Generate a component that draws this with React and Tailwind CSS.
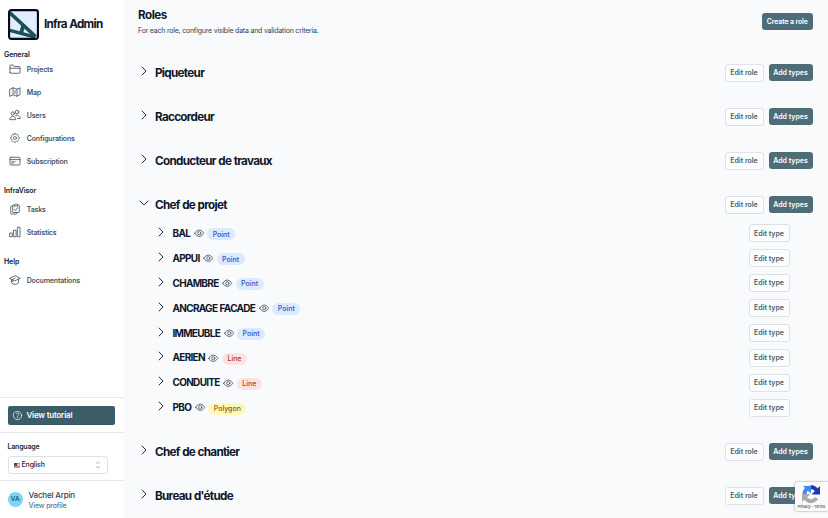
import React from "react";
import {
  HiOutlineCog8Tooth,
  HiOutlineQuestionMarkCircle,
} from "react-icons/hi2";

function icon(content) {
  return function Icon({ className }) {
    return (
      <svg className={className} viewBox="0 0 24 24" fill="none" stroke="currentColor" strokeWidth="1.7" strokeLinecap="round" strokeLinejoin="round">
        {content}
      </svg>
    );
  };
}

const Folder = icon(<path d="M2 19V5.5Q2 4 3.5 4H8L10.5 7H20.5Q22 7 22 8.5V19Q22 20.5 20.5 20.5H3.5Q2 20.5 2 19ZM2 10.5H22" />);
const MapFold = icon(
  <>
    <path d="M2 6.5L8 3.5L16 6.5L22 3.5V17.5L16 20.5L8 17.5L2 20.5Z" />
    <path d="M8 3.5V17.5M16 6.5V20.5M12 9V15" />
  </>
);
const Users = icon(
  <>
    <circle cx="7.5" cy="9" r="3.4" />
    <circle cx="16" cy="6" r="3.6" />
    <path d="M1.5 20.5C1.5 12.8 13.5 12.8 13.5 20.5ZM13 13.2C17 10.8 22.5 13.2 22.5 19H17" />
  </>
);
const Card = icon(<path d="M3.5 4.5H20.5Q22 4.5 22 6V18.5Q22 20 20.5 20H3.5Q2 20 2 18.5V6Q2 4.5 3.5 4.5ZM2 9.2H22M5.5 13.5H12M5.5 16.4H8.5" />);
const Tasks = icon(
  <>
    <path d="M7.5 6H4.5Q3.5 6 3.5 7V21Q3.5 22 4.5 22H14.5Q15.5 22 15.5 21V19" />
    <path d="M11 4H8.5Q7.5 4 7.5 5V18Q7.5 19 8.5 19H19.5Q20.5 19 20.5 18V5Q20.5 4 19.5 4H17M11 5.5V3.5Q14 0 17 3.5V5.5ZM11 12.5L13.2 15L17.2 9.5" />
  </>
);
const Bars = icon(<path d="M2 14H6.5V21.5H2ZM9.7 8.5H14.2V21.5H9.7ZM17.5 2.5H22V21.5H17.5Z" />);
const Cap = icon(<path d="M1.5 8.5L12 3.5L22.5 8.5L12 13.5ZM5 10.5V17.5Q12 24 19 17.5V10.5M12 8.5L7.5 11V15" />);
const Eye = icon(
  <>
    <path d="M1.5 12Q6 4.5 12 4.5T22.5 12Q18 19.5 12 19.5T1.5 12Z" />
    <circle cx="12" cy="12" r="3.7" />
  </>
);

const NAV = [
  {
    title: "General",
    items: [
      ["Projects", Folder],
      ["Map", MapFold],
      ["Users", Users],
      ["Configurations", HiOutlineCog8Tooth],
      ["Subscription", Card],
    ],
  },
  {
    title: "InfraVisor",
    items: [
      ["Tasks", Tasks],
      ["Statistics", Bars],
    ],
  },
  { title: "Help", items: [["Documentations", Cap]] },
];

const TYPES = [
  ["BAL", "Point"],
  ["APPUI", "Point"],
  ["CHAMBRE", "Point"],
  ["ANCRAGE FACADE", "Point"],
  ["IMMEUBLE", "Point"],
  ["AERIEN", "Line"],
  ["CONDUITE", "Line"],
  ["PBO", "Polygon"],
];

const ROLES = [
  { name: "Piqueteur" },
  { name: "Raccordeur" },
  { name: "Conducteur de travaux" },
  { name: "Chef de projet", types: TYPES },
  { name: "Chef de chantier" },
  { name: "Bureau d'étude" },
];

const BADGE = {
  Point: "bg-[#dbeafe] text-[#3451c6]",
  Line: "bg-[#fee2e2] text-[#b03a2e]",
  Polygon: "bg-[#fef9b8] text-[#95501c]",
};

function Logo() {
  return (
    <svg className="size-[31px] shrink-0" viewBox="0 0 32 32">
      <rect x="1.1" y="1.1" width="29.8" height="29.8" rx="2.4" fill="#e3eefb" />
      <g stroke="#1b515a" fill="none">
        <path d="M2 4 L28.5 28.5" strokeWidth="3.6" />
        <path d="M2 22 L28 29" strokeWidth="3.6" />
        <path d="M16 16 L13.5 25" strokeWidth="4" />
      </g>
      <rect x="1.1" y="1.1" width="29.8" height="29.8" rx="2.4" fill="none" stroke="#050b1c" strokeWidth="2.2" />
    </svg>
  );
}

function Chevron({ open }) {
  return (
    <svg className="size-3 shrink-0" viewBox="0 0 12 12" fill="none" stroke="#1e293b" strokeWidth="1" strokeLinecap="round" strokeLinejoin="round">
      <path d={open ? "M2 4.1 L6 8 L10 4.1" : "M4.1 2 L8 6 L4.1 10"} />
    </svg>
  );
}

function Outline({ children, className }) {
  return (
    <button className={"flex h-[18px] items-center justify-center rounded-[3px] border border-[#dde2e8] bg-[#fcfdfe] pt-px text-[7px] font-semibold text-[#48606b] " + className}>
      {children}
    </button>
  );
}

function Solid({ children, className }) {
  return (
    <button className={"flex h-[17px] items-center justify-center rounded-[3px] bg-[#4f6d78] pt-px text-[7px] font-semibold whitespace-nowrap text-white " + className}>
      {children}
    </button>
  );
}

function Role({ name, types }) {
  return (
    <section>
      <div className="flex h-11 items-center">
        <div className="-mt-0.5 flex"><Chevron open={!!types} /></div>
        <h2 className="ml-[5.5px] flex-1 pt-[3px] text-[11.7px] font-bold tracking-[-0.7px] text-[#0f172a] [word-spacing:0.4px]">{name}</h2>
        <Outline className="mt-px w-[39px]">Edit role</Outline>
        <Solid className="mt-px ml-[5px] w-11">Add types</Solid>
      </div>
      {types && (
        <div className="-mt-[5px] mb-[9px] pl-[17px] pr-[23px]">
          {types.map(([label, kind]) => (
            <div key={label} className="flex h-[24.9px] items-center">
              <div className="-mt-[3px] flex"><Chevron /></div>
              <h3 className="ml-[6px] text-[10px] font-bold tracking-[-0.7px] text-[#0f172a] [word-spacing:0.6px]">{label}</h3>
              <Eye className="ml-[3.5px] size-[10.5px] text-[#334155]" />
              <span className={"ml-[3px] mt-0.5 flex h-3 items-center rounded-full px-[5.5px] pt-px text-[7px] font-medium " + BADGE[kind]}>{kind}</span>
              <Outline className="ml-auto w-[41px]">Edit type</Outline>
            </div>
          ))}
        </div>
      )}
    </section>
  );
}

function Sidebar() {
  return (
    <aside className="flex w-[124px] shrink-0 flex-col bg-white">
      <div className="flex h-[49px] items-center gap-[5.5px] pl-[7.5px]">
        <Logo />
        <span className="pt-px text-[11.7px] font-bold tracking-[-0.75px] whitespace-nowrap text-[#0f172a] [word-spacing:0.4px]">Infra Admin</span>
      </div>
      <nav>
        {NAV.map(({ title, items }, i) => (
          <div key={title} className="mb-[11.7px]">
            <div className={"flex h-[11px] items-center pl-1 text-[7px] font-semibold tracking-[-0.1px] text-[#0f172a] " + (i ? "mb-[2.3px]" : "-mb-[2.2px]")}>
              <span className={i ? "pt-0.5" : "pt-px"}>{title}</span>
            </div>
            {items.map(([label, Icon]) => (
              <a key={label} className="flex h-[23px] items-center gap-[5.7px] pl-[9px] text-[7px] font-semibold tracking-[-0.17px] text-[#475569]">
                <Icon className="size-3" />
                <span className="pt-px">{label}</span>
              </a>
            ))}
          </div>
        ))}
      </nav>
      <div className="mt-auto flex h-[35px] items-center border-t border-[#e5e9ee] pr-[9px] pl-[7.5px]">
        <button className="flex h-[19px] w-full items-center gap-1 rounded-[2px] bg-[#3b5d69] pl-1 text-[8px] font-semibold tracking-[-0.22px] text-white">
          <HiOutlineQuestionMarkCircle className="size-[11px]" />
          View tutorial
        </button>
      </div>
      <div className="h-[48px] border-t border-[#e5e9ee] px-[7.5px] pt-[8px]">
        <div className="text-[7px] leading-[11px] font-semibold tracking-[-0.2px] text-[#1e293b]">Language</div>
        <div className="mt-[3.5px] flex h-[18px] w-[100px] items-center rounded-[3px] border border-[#dbe3e8] pt-px pr-1.5 pl-[5px] text-[7px] font-medium tracking-[-0.15px] text-[#1e293b]">
          <svg className="mr-0.5 h-[5px] w-[6px]" viewBox="0 0 12 10">
            <path d="M0 0H12V10H0Z" fill="#fff" />
            <path d="M0 1H12M0 4H12M0 7H12M0 9.5H12" stroke="#dc3c32" strokeWidth="1.5" />
            <path d="M0 0H6V5.5H0Z" fill="#30478a" />
          </svg>
          English
          <svg className="ml-auto h-2 w-1.5" viewBox="0 0 6 8" fill="none" stroke="#8c96a3" strokeWidth=".7" strokeLinecap="round">
            <path d="M1.3 2.5 L3 .8 L4.7 2.5 M1.3 5.5 L3 7.2 L4.7 5.5" />
          </svg>
        </div>
      </div>
      <div className="flex h-[38px] items-center gap-[5.5px] border-t border-[#e5e9ee] pl-[7.5px]">
        <div className="flex size-[15.5px] items-center justify-center rounded-full bg-[#7dd3fc] text-[6.5px] font-medium text-[#1e4057]">VA</div>
        <div className="pt-px">
          <div className="text-[8px] leading-[10px] font-medium tracking-[-0.2px] text-[#334155]">Vachel Arpin</div>
          <div className="pt-px text-[7px] leading-[10px] font-medium tracking-[-0.15px] text-[#64748b]">View profile</div>
        </div>
      </div>
    </aside>
  );
}

function Captcha() {
  return (
    <div className="absolute top-[482px] right-0 flex h-[29px] w-[33.5px] flex-col items-center rounded-l-[2px] bg-[#fafafa] pt-[3px] shadow-[0_0_2px_#777]">
      <svg className="size-[18px] shrink-0" viewBox="0 0 36 36" fill="none" strokeWidth="8">
        <path d="M18 4A14 14 0 0 1 31 18" stroke="#1c3aa9" />
        <path d="M36 2V19H19Z" fill="#1c3aa9" />
        <path d="M5 18A13 13 0 0 1 18 5" stroke="#4285f4" />
        <path d="M2 2H18V17Z" fill="#4285f4" />
        <path d="M5 18A13 13 0 0 0 29 26" stroke="#ababab" />
        <path d="M0 34V18H17Z" fill="#ababab" />
      </svg>
      <div className="mt-px text-[4px] leading-[5px] tracking-[-0.15px] whitespace-nowrap text-[#333]">Privacy - Terms</div>
    </div>
  );
}

export default function App() {
  return (
    <div className="relative flex h-[518px] w-[828px] overflow-hidden bg-[#f8fafc] font-['Inter',sans-serif]">
      <Sidebar />
      <main className="min-w-0 flex-1 pr-[15.5px] pl-[13.5px]">
        <header className="flex h-[50px] items-start">
          <div className="flex-1 pt-2 pl-[0.5px]">
            <h1 className="text-[11.7px] leading-[15px] font-bold tracking-[-0.5px] text-[#0f172a]">Roles</h1>
            <p className="mt-[2px] text-[7px] leading-[11px] tracking-[-0.21px] text-[#334155]">For each role, configure visible data and validation criteria.</p>
          </div>
          <Solid className="mt-[13px] w-[50.5px] tracking-[-0.15px]">Create a role</Solid>
        </header>
        {ROLES.map((role) => <Role key={role.name} {...role} />)}
      </main>
      <Captcha />
    </div>
  );
}
